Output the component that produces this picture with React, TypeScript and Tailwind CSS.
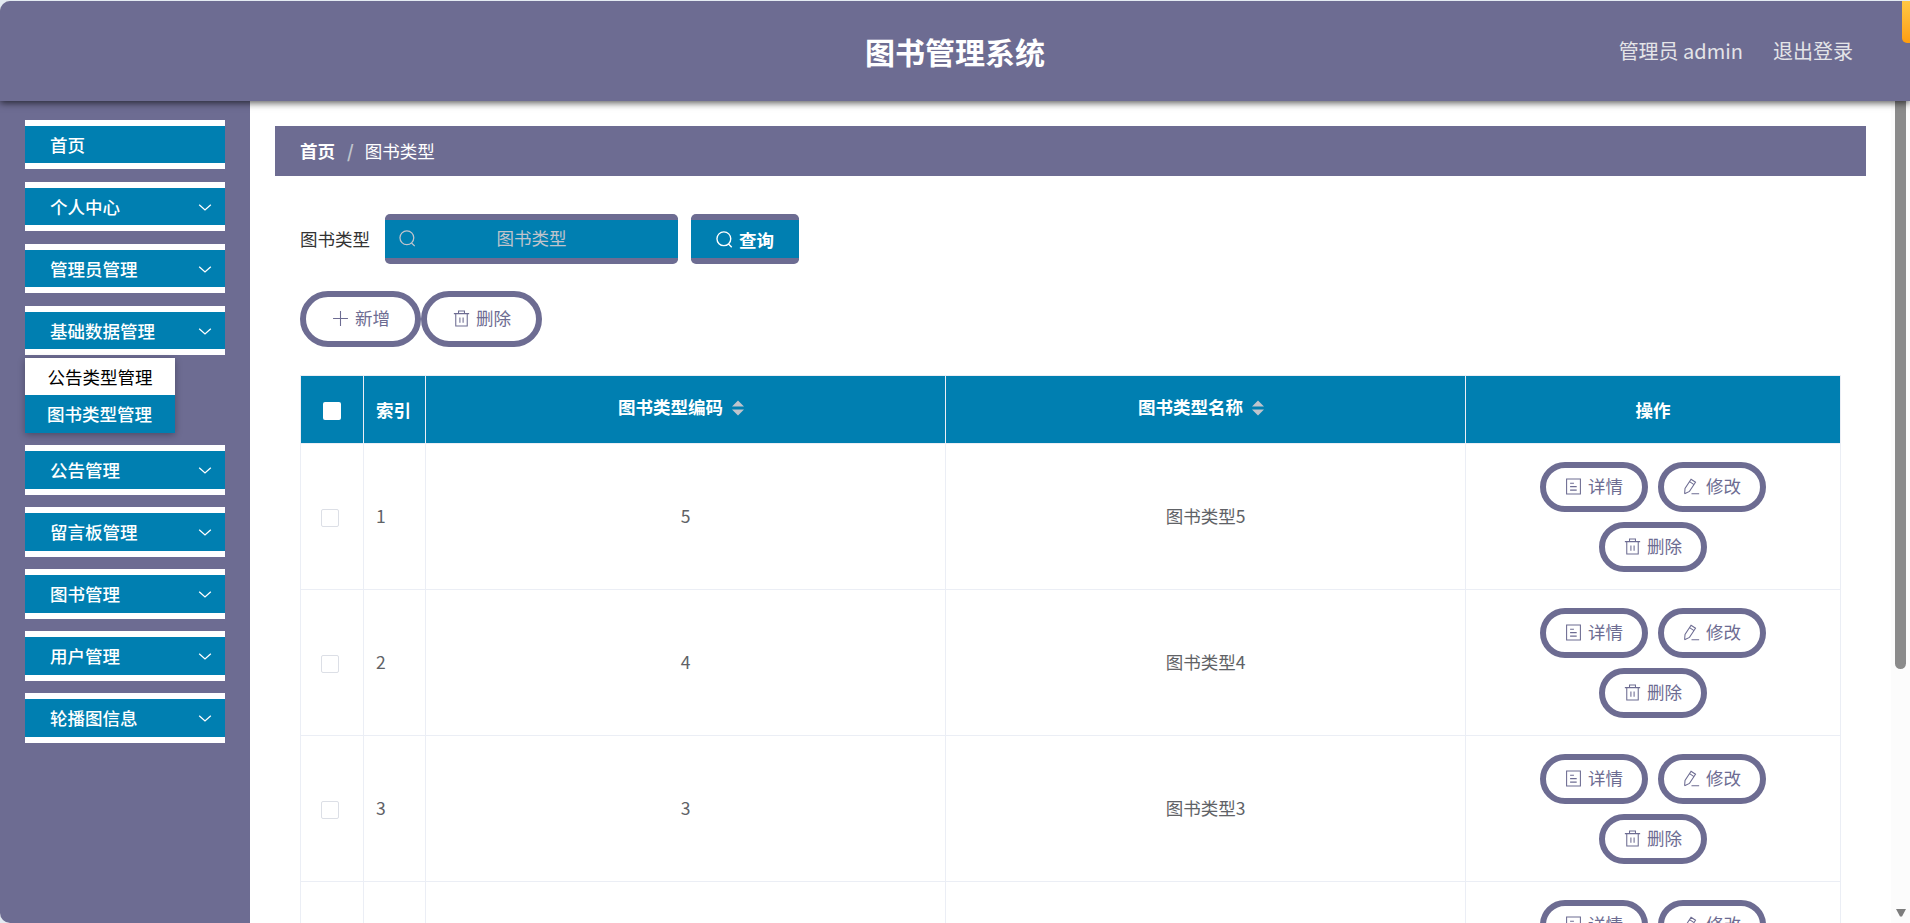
import { Fragment } from "react";
import { clsx } from "clsx";

const menus = [
  { title: "首页" },
  { title: "个人中心", arrow: true },
  { title: "管理员管理", arrow: true },
  {
    title: "基础数据管理",
    arrow: true,
    children: ["公告类型管理", "图书类型管理"],
  },
  { title: "公告管理", arrow: true },
  { title: "留言板管理", arrow: true },
  { title: "图书管理", arrow: true },
  { title: "用户管理", arrow: true },
  { title: "轮播图信息", arrow: true },
];

const rows = [
  { index: 1, code: "5", name: "图书类型5" },
  { index: 2, code: "4", name: "图书类型4" },
  { index: 3, code: "3", name: "图书类型3" },
  { index: 4, code: "2", name: "图书类型2" },
];

const iconPaths = {
  search: "M11.8 12.2 14.8 15.2M13.9 7.3a6.5 6.5 0 1 1-13 0 6.5 6.5 0 0 1 13 0Z",
  plus: "M8 1v14M1 8h14",
  trash: "M.8 3.4h14.4M5.2 3.4V1h5.6v2.4M2.6 3.4V15h10.8V3.4M6.5 7v5M9.5 7v5",
  detail: "M1.5 1h13v14h-13zM4.8 4.9h3.6M4.8 8.1H11M4.8 11.4H11",
  edit: "M1.5 14.9 1.9 9.9 7.6 1.2 11.8 4 6.1 12.6 1.5 14.9M6.2 3.4l4.2 2.8M8 14.9h7.2",
  down: "M2.2 5.8 8 11l5.8-5.2",
};

function Icon({
  name,
  className,
}: {
  name: keyof typeof iconPaths;
  className?: string;
}) {
  return (
    <svg
      viewBox="0 0 16 16"
      fill="none"
      stroke="currentColor"
      className={clsx("shrink-0", className ?? "size-[17px]")}
    >
      <path d={iconPaths[name]} />
    </svg>
  );
}

function PillButton({
  icon,
  label,
  large,
}: {
  icon: keyof typeof iconPaths;
  label: string;
  large?: boolean;
}) {
  return (
    <button
      className={clsx(
        "flex items-center justify-center gap-[6px] rounded-full border-[6px] border-[#6d6c92] bg-white pb-0.5 text-[#6d6c92]",
        large ? "h-14 w-[121px] pl-px" : "h-[50px] w-[108px]",
      )}
    >
      <Icon name={icon} />
      <span>{label}</span>
    </button>
  );
}

function SortCaret() {
  return (
    <svg viewBox="0 0 12 16" className="mt-px ml-[9px] h-4 w-3 fill-[#c0c4cc]">
      <path d="M6 .5l6 6H0zM6 15.5l6-6H0z" />
    </svg>
  );
}

function Sidebar() {
  return (
    <aside className="w-[250px] shrink-0 bg-[#6d6c92] px-[25px] pt-[19px]">
      {menus.map((menu, i) => (
        <Fragment key={menu.title}>
          <div
            className={clsx(
              "flex items-center justify-between border-y-[6px] border-white bg-[#007fb1] pr-3 pl-[25px] font-medium text-white",
              i < 4 ? "h-[49px]" : "h-[50px]",
              menu.children ? "mb-[3px]" : i < 4 ? "mb-[13px]" : "mb-3",
            )}
          >
            <span>{menu.title}</span>
            {menu.arrow && <Icon name="down" className="size-4 [stroke-width:1.3]" />}
          </div>
          {menu.children && (
            <div className="mb-3 w-[150px] shadow-[0_2px_7px_rgba(0,0,0,0.3)]">
              <div className="flex h-[37px] items-center bg-white pl-[22.5px] text-black">
                {menu.children[0]}
              </div>
              <div className="flex h-[38px] items-center bg-[#007fb1] pl-[22px] font-medium text-white">
                {menu.children[1]}
              </div>
            </div>
          )}
        </Fragment>
      ))}
    </aside>
  );
}

function TypeTable() {
  return (
    <table className="mt-7 w-[1541px] table-fixed border-collapse text-[#606266]">
      <colgroup>
        <col className="w-[63px]" />
        <col className="w-[62px]" />
        <col className="w-[520px]" />
        <col className="w-[520px]" />
        <col className="w-[375px]" />
      </colgroup>
      <thead>
        <tr className="h-[68px] bg-[#007fb1] font-bold text-white [&>th]:border [&>th]:border-[#ebeef5]">
          <th>
            <div className="mx-auto mt-0.5 size-[18px] rounded-[2px] bg-white" />
          </th>
          <th className="pr-0.5">索引</th>
          <th>
            <div className="flex items-center justify-center pr-[9px] pb-[5px]">
              图书类型编码
              <SortCaret />
            </div>
          </th>
          <th>
            <div className="flex items-center justify-center pr-[9px] pb-[5px]">
              图书类型名称
              <SortCaret />
            </div>
          </th>
          <th>操作</th>
        </tr>
      </thead>
      <tbody>
        {rows.map((row) => (
          <tr
            key={row.index}
            className="h-[146px] [&>td]:border [&>td]:border-[#ebeef5] [&>td]:p-0"
          >
            <td>
              <div className="mt-[3px] ml-[20px] size-[17.5px] rounded-[2px] border border-[#dcdfe6] bg-white" />
            </td>
            <td>
              <div className="pb-0.5 pl-3">{row.index}</div>
            </td>
            <td>
              <div className="pb-0.5 text-center">{row.code}</div>
            </td>
            <td>
              <div className="pb-0.5 text-center">{row.name}</div>
            </td>
            <td>
              <div className="flex flex-wrap justify-center gap-[10px] px-10 pt-px">
                <PillButton icon="detail" label="详情" />
                <PillButton icon="edit" label="修改" />
                <PillButton icon="trash" label="删除" />
              </div>
            </td>
          </tr>
        ))}
      </tbody>
    </table>
  );
}

export default function App() {
  return (
    <div className="h-[923px] overflow-hidden bg-[#e4ebf2] pt-px font-['Noto_Sans_CJK_SC',sans-serif] text-[17.5px] leading-[26px]">
      <div className="relative flex h-[922px] flex-col overflow-hidden rounded-l-[10px] bg-white">
        <header className="relative z-10 grid h-[100px] shrink-0 grid-cols-[1fr_auto_1fr] items-center bg-[#6d6c92] shadow-[0_2px_7px_rgba(0,0,0,0.65)]">
          <h1 className="col-start-2 text-[30px] font-bold text-white">
            图书管理系统
          </h1>
          <div className="flex justify-end gap-[30px] pr-[57px] text-xl text-[#e4e4e8]">
            <span>管理员 admin</span>
            <span>退出登录</span>
          </div>
        </header>
        <div className="absolute -top-2 -right-2 z-20 h-[50px] w-4 rounded-[5px] bg-linear-to-b from-[#ffd04a] to-[#ff9d0c]" />

        <div className="flex min-h-0 flex-1">
          <Sidebar />
          <main className="min-w-0 flex-1 overflow-hidden pt-[25px] pl-[25px]">
            <nav className="flex h-[50px] w-[1591px] items-center bg-[#6d6c92] pl-[25px] text-white">
              <span className="font-bold">首页</span>
              <span className="mr-[11px] ml-3 font-bold text-[#c0c4cc]">/</span>
              <span>图书类型</span>
            </nav>

            <div className="pt-[38px] pl-[25px]">
              <div className="flex h-[50px] items-center">
                <label className="w-[85px] text-[#333333]">图书类型</label>
                <div className="relative flex h-[50px] w-[293px] items-center justify-center rounded-[5px] border-y-[6px] border-[#6d6c92] bg-[#007fb1] pb-[3px] text-[#c0c4cc]">
                  <Icon name="search" className="absolute top-[10px] left-[14px] size-[17px] [stroke-width:1.2]" />
                  图书类型
                </div>
                <button className="ml-[13px] flex h-[50px] w-[108px] items-center justify-center gap-[6px] rounded-[5px] border-y-[6px] border-[#6d6c92] bg-[#007fb1] pt-px font-bold text-white">
                  <Icon name="search" className="size-[17px] [stroke-width:1.3]" />
                  查询
                </button>
              </div>
              <div className="mt-[27px] flex">
                <PillButton icon="plus" label="新增" large />
                <PillButton icon="trash" label="删除" large />
              </div>
              <TypeTable />
            </div>
          </main>
          <div className="flex w-[19px] shrink-0 flex-col items-center justify-between bg-[#fcfcfc] pb-[6px]">
            <div className="h-[568px] w-[11px] rounded-b-full bg-[#8b8b8b]" />
            <svg viewBox="0 0 10 8" className="h-2 w-[10px] fill-[#7d7d7d]">
              <path d="M0 0h10L6 7.5H4z" />
            </svg>
          </div>
        </div>
      </div>
    </div>
  );
}
